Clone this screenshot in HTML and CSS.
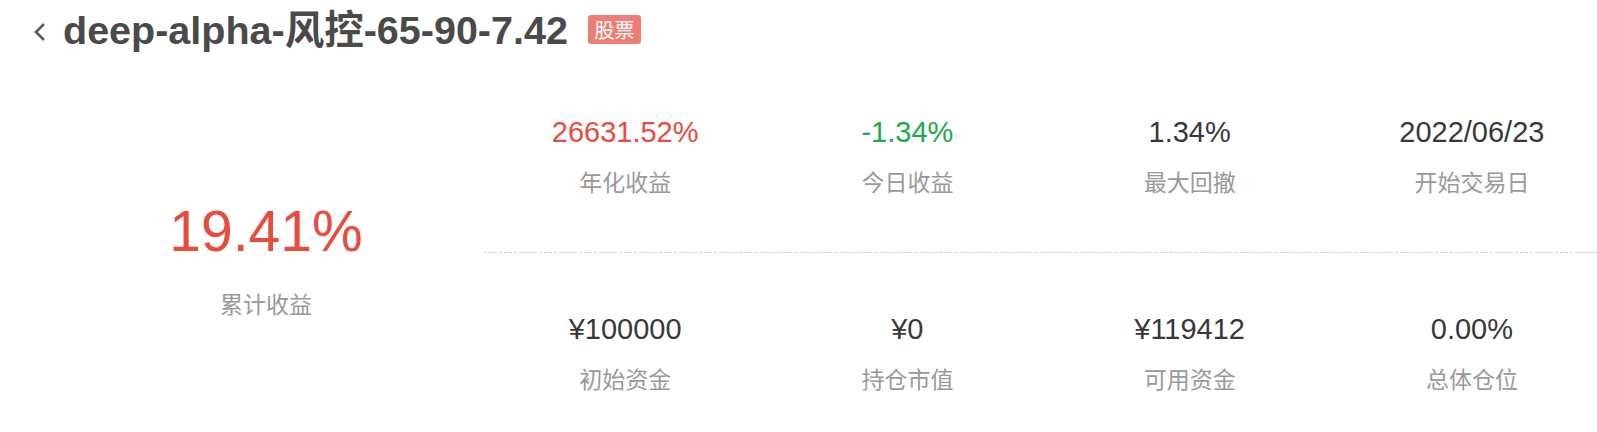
FILE: index.html
```html
<!DOCTYPE html>
<html lang="zh-CN">
<head>
<meta charset="utf-8">
<title>deep-alpha-风控-65-90-7.42</title>
<link rel="stylesheet" href="styles.css">
</head>
<body>
<header class="header">
  <svg class="back" width="13" height="20" viewBox="0 0 13 20"><polyline points="11,2 3,10 11,18" fill="none" stroke="#555a60" stroke-width="2.6"/></svg>
  <h1 class="title">deep-alpha-风控-65-90-7.42</h1>
  <span class="badge">股票</span>
</header>
<main class="main">
  <section class="total">
    <div class="total-value red">19.41%</div>
    <div class="label">累计收益</div>
  </section>
  <section class="stats">
    <div class="row row-top">
      <div class="cell"><div class="value red">26631.52%</div><div class="label">年化收益</div></div>
      <div class="cell"><div class="value green">-1.34%</div><div class="label">今日收益</div></div>
      <div class="cell"><div class="value">1.34%</div><div class="label">最大回撤</div></div>
      <div class="cell"><div class="value">2022/06/23</div><div class="label">开始交易日</div></div>
    </div>
    <div class="row">
      <div class="cell"><div class="value">¥100000</div><div class="label">初始资金</div></div>
      <div class="cell"><div class="value">¥0</div><div class="label">持仓市值</div></div>
      <div class="cell"><div class="value">¥119412</div><div class="label">可用资金</div></div>
      <div class="cell"><div class="value">0.00%</div><div class="label">总体仓位</div></div>
    </div>
  </section>
</main>
</body>
</html>
```

FILE: styles.css
```css
html, body {
  margin: 0;
  padding: 0;
  background: #fff;
  overflow: hidden;
}
body {
  font-family: "Liberation Sans", "Noto Sans CJK SC", sans-serif;
  color: #333;
}
.header {
  display: flex;
  align-items: center;
  height: 56px;
  padding-left: 33px;
  padding-top: 4px;
  box-sizing: border-box;
}
.back {
  display: block;
  margin-top: 3px;
}
.title {
  margin: 0 0 0 17px;
  font-size: 39.5px;
  line-height: 39px;
  font-weight: bold;
  color: #4a4a4a;
  white-space: nowrap;
}
.badge {
  margin-left: 20px;
  margin-top: -2px;
  width: 53px;
  height: 29px;
  border-radius: 3px;
  background: #ee7e75;
  color: #fff;
  font-family: "Noto Sans CJK SC", sans-serif;
  font-size: 20px;
  line-height: 29px;
  text-align: center;
}
.main {
  display: flex;
  width: 1613px;
}
.total {
  flex: 0 0 436px;
  margin-left: 48px;
  display: flex;
  flex-direction: column;
  align-items: center;
  padding-top: 143px;
  box-sizing: border-box;
}
.total-value {
  font-size: 57px;
  line-height: 64px;
}
.total .label {
  margin-top: 26px;
}
.stats {
  flex: 0 0 1129px;
}
.row {
  display: flex;
  padding-top: 56px;
  padding-bottom: 53px;
}
.row-top {
  border-bottom: 1px dashed #cfcfcf;
}
.cell {
  flex: 1 1 0;
  display: flex;
  flex-direction: column;
  align-items: center;
}
.value {
  font-size: 29px;
  line-height: 40px;
  color: #383838;
  white-space: nowrap;
}
.label {
  margin-top: 15px;
  font-size: 23px;
  line-height: 32px;
  color: #999;
  white-space: nowrap;
}
.red { color: #e84c3d; }
.green { color: #22a94a; }
```
